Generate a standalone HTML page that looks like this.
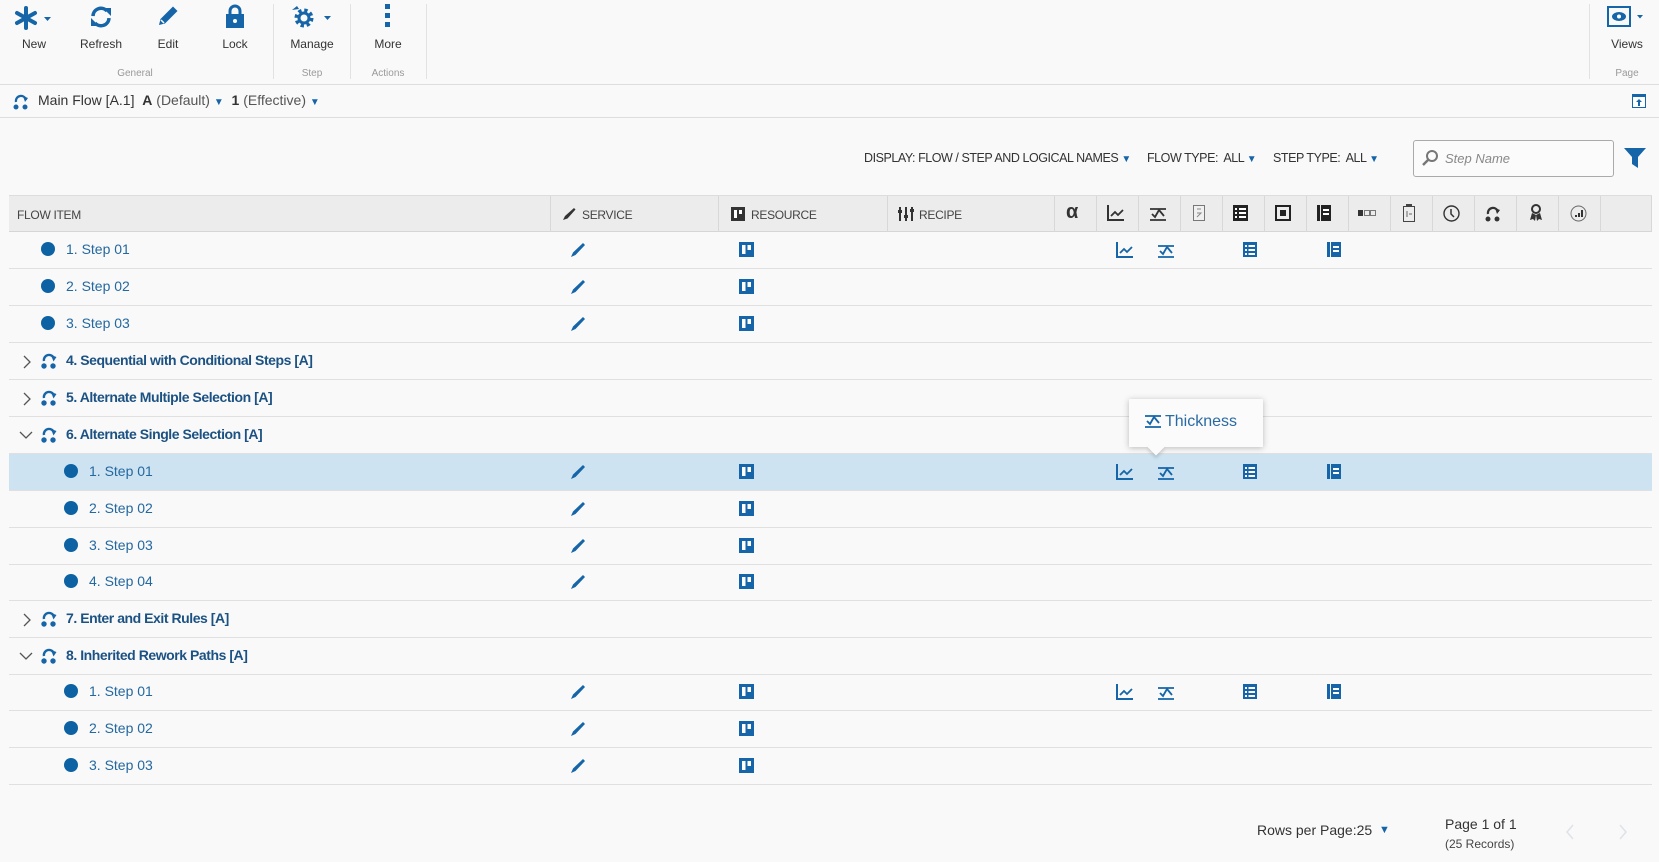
<!DOCTYPE html>
<html><head><meta charset="utf-8"><style>
*{box-sizing:border-box;margin:0;padding:0}
body{width:1659px;height:862px;background:#f9f9f9;font-family:"Liberation Sans",sans-serif;position:relative;overflow:hidden;color:#333}
.a{position:absolute}
.tb{font-size:12px;color:#333;text-align:center;width:70px}
.gl{font-size:10px;color:#999;text-align:center}
.sep{width:1px;background:#e2e2e2;top:4px;height:75px}
.hl{left:0;width:1659px;height:1px;background:#ddd}
.row{left:9px;width:1643px;height:37px;border-bottom:1px solid #e0e0e0}
.sel{background:#cde3f1}
.st{font-size:14px;color:#2468a0;top:9px}
.gr{font-size:14px;color:#1c5283;font-weight:bold;top:9px;letter-spacing:-.45px}
.dot{width:14px;height:14px;border-radius:50%;background:#0d62a3;top:10px}
.hd{font-size:12px;color:#444;top:12px;letter-spacing:-.3px}
.hc{top:0;height:36px;width:1px;background:#d8d8d8}
.fl{font-size:12.5px;color:#333;letter-spacing:-.45px;top:151px}
svg{position:absolute}
</style></head><body>
<svg class="a" style="left:14px;top:6px" width="42" height="24" viewBox="0 0 42 24"><g stroke="#1565a8" stroke-width="4" stroke-linecap="round"><line x1="12" y1="2" x2="12" y2="22"/><line x1="3" y1="7" x2="21" y2="17"/><line x1="3" y1="17" x2="21" y2="7"/></g><path d="M30 11h7l-3.5 4z" fill="#1565a8"/></svg>
<svg class="a" style="left:89px;top:5px" width="24" height="24" viewBox="0 0 24 24"><path d="M4 11a8 8 0 0 1 14-5" stroke="#1565a8" stroke-width="3.5" fill="none"/><path d="M20 13a8 8 0 0 1-14 5" stroke="#1565a8" stroke-width="3.5" fill="none"/><path d="M14 3h8v8z M10 21H2v-8z" fill="#1565a8"/></svg>
<svg class="a" style="left:156px;top:4px" width="24" height="24" viewBox="0 0 24 24"><path d="M3 21l1.5-6L17 2.5l4.5 4.5L9 19.5z" fill="#1565a8"/><path d="M5 16l3 3" stroke="#fff" stroke-width="1.5"/></svg>
<svg class="a" style="left:225px;top:4px" width="20" height="24" viewBox="0 0 20 24"><path d="M5 11V7a5 5 0 0 1 10 0v4" stroke="#1565a8" stroke-width="3" fill="none"/><rect x="1" y="10" width="18" height="14" fill="#1565a8"/><circle cx="10" cy="17" r="2" fill="#fff"/></svg>
<svg class="a" style="left:290px;top:4px" width="44" height="26" viewBox="0 0 44 26"><circle cx="14" cy="14" r="7" stroke="#1565a8" stroke-width="5" fill="none" stroke-dasharray="3 2.5"/><circle cx="14" cy="14" r="5" stroke="#1565a8" stroke-width="3" fill="none"/><path d="M2 6l5-4 2 3z" fill="#1565a8"/><path d="M34 12h7l-3.5 4z" fill="#1565a8"/></svg>
<svg class="a" style="left:385px;top:4px" width="6" height="24"><rect x="0" y="0" width="5" height="5" fill="#1565a8"/><rect x="0" y="9" width="5" height="5" fill="#1565a8"/><rect x="0" y="18" width="5" height="5" fill="#1565a8"/></svg>
<div class="a tb" style="left:-1px;top:37px">New</div>
<div class="a tb" style="left:66px;top:37px">Refresh</div>
<div class="a tb" style="left:133px;top:37px">Edit</div>
<div class="a tb" style="left:200px;top:37px">Lock</div>
<div class="a tb" style="left:277px;top:37px">Manage</div>
<div class="a tb" style="left:353px;top:37px">More</div>
<div class="a gl" style="left:100px;top:68px;width:70px">General</div>
<div class="a gl" style="left:277px;top:68px;width:70px">Step</div>
<div class="a gl" style="left:353px;top:68px;width:70px">Actions</div>
<div class="a sep" style="left:273px"></div><div class="a sep" style="left:350px"></div><div class="a sep" style="left:426px"></div><div class="a sep" style="left:1589px"></div>
<svg class="a" style="left:1607px;top:6px" width="44" height="22"><rect x="1" y="1" width="22" height="19" fill="none" stroke="#1565a8" stroke-width="2"/><ellipse cx="12" cy="10.5" rx="7" ry="4.5" fill="#1565a8"/><circle cx="12" cy="10.5" r="2" fill="#fff"/><path d="M30 9h6l-3 3.5z" fill="#1565a8"/></svg>
<div class="a tb" style="left:1592px;top:37px">Views</div>
<div class="a gl" style="left:1592px;top:68px;width:70px">Page</div>
<div class="a hl" style="top:84px"></div>
<svg class="a" style="left:13px;top:93px" width="17" height="17" viewBox="0 0 17 17"><path d="M3 9a5 5 0 0 1 10-2" stroke="#1565a8" stroke-width="2.2" fill="none"/><path d="M10 3l5 2-3 4z" fill="#1565a8"/><circle cx="3" cy="14" r="2.5" fill="#1565a8"/><circle cx="12" cy="14" r="2.5" fill="#1565a8"/></svg>
<div class="a" style="left:38px;top:92px;font-size:14px;color:#333">Main Flow [A.1] &nbsp;<b>A</b> <span style="color:#555">(Default)</span> <span style="color:#1565a8;font-size:10px">▼</span> &nbsp;<b>1</b> <span style="color:#555">(Effective)</span> <span style="color:#1565a8;font-size:10px">▼</span></div>
<svg class="a" style="left:1632px;top:94px" width="14" height="14"><rect x=".5" y=".5" width="13" height="13" fill="#fff" stroke="#1565a8"/><rect x="0" y="0" width="14" height="3" fill="#1565a8"/><path d="M7 5l-3 3h2v4h2V8h2z" fill="#1565a8"/></svg>
<div class="a hl" style="top:117px"></div>
<div class="a fl" style="left:864px">DISPLAY: FLOW / STEP AND LOGICAL NAMES <span style="color:#1565a8;font-size:10px">▼</span></div>
<div class="a fl" style="left:1147px">FLOW TYPE:&nbsp; ALL <span style="color:#1565a8;font-size:10px">▼</span></div>
<div class="a fl" style="left:1273px">STEP TYPE:&nbsp; ALL <span style="color:#1565a8;font-size:10px">▼</span></div>
<div class="a" style="left:1413px;top:140px;width:201px;height:37px;border:1px solid #aaa;border-radius:3px;background:#fbfbfb"></div>
<svg class="a" style="left:1421px;top:149px" width="18" height="18"><circle cx="11" cy="7" r="5" stroke="#777" stroke-width="2" fill="none"/><line x1="7" y1="11" x2="2" y2="16" stroke="#777" stroke-width="2.5"/></svg>
<div class="a" style="left:1445px;top:151px;font-size:13px;color:#888;font-style:italic">Step Name</div>
<svg class="a" style="left:1624px;top:148px" width="22" height="20"><path d="M0 0h22l-8 9v11l-6-4V9z" fill="#1565a8"/></svg>
<div class="a" style="left:9px;top:195px;width:1643px;height:37px;background:#ececec;border-top:1px solid #ddd;border-bottom:1px solid #d6d6d6">
<div class="a hd" style="left:8px">FLOW ITEM</div>
<div class="a hc" style="left:541px"></div><div class="a hc" style="left:709px"></div><div class="a hc" style="left:878px"></div>
<div class="a hc" style="left:1045px"></div><div class="a hc" style="left:1087px"></div><div class="a hc" style="left:1129px"></div><div class="a hc" style="left:1171px"></div><div class="a hc" style="left:1213px"></div><div class="a hc" style="left:1255px"></div><div class="a hc" style="left:1297px"></div><div class="a hc" style="left:1339px"></div><div class="a hc" style="left:1381px"></div><div class="a hc" style="left:1423px"></div><div class="a hc" style="left:1465px"></div><div class="a hc" style="left:1507px"></div><div class="a hc" style="left:1549px"></div><div class="a hc" style="left:1591px"></div><div class="a hc" style="left:1642px"></div>
<svg class="a" style="left:553px;top:11px" width="14" height="14"><path d="M1 13l2-4 9-8 1.5 1.5-8 9z" fill="#333"/></svg>
<div class="a hd" style="left:573px">SERVICE</div>
<svg class="a" style="left:722px;top:11px" width="14" height="14"><rect width="14" height="14" fill="#333"/><rect x="3" y="3" width="3" height="8" fill="#fff"/><rect x="8" y="3" width="3" height="4" fill="#fff"/></svg>
<div class="a hd" style="left:742px">RESOURCE</div>
<svg class="a" style="left:889px;top:11px" width="16" height="14"><g fill="#333"><rect x="1" width="2" height="14"/><rect x="7" width="2" height="14"/><rect x="13" width="2" height="14"/><rect x="0" y="3" width="4" height="3"/><rect x="6" y="8" width="4" height="3"/><rect x="12" y="2" width="4" height="3"/></g></svg>
<div class="a hd" style="left:910px">RECIPE</div>
<div class="a" style="left:1057px;top:5px;font-size:20px;font-weight:bold;color:#333">α</div>
<svg class="a" style="left:1098px;top:9px" width="18" height="16"><path d="M1 0v15h16" stroke="#333" stroke-width="2" fill="none"/><path d="M4 11l4-4 3 3 5-5" stroke="#333" stroke-width="1.8" fill="none"/></svg>
<svg class="a" style="left:1140px;top:9px" width="18" height="16"><path d="M1 15h16M1 4h16" stroke="#333" stroke-width="1.8"/><path d="M3 9l3 3 4-7 5 6" stroke="#333" stroke-width="1.8" fill="none"/></svg>
<svg class="a" style="left:1184px;top:9px" width="12" height="16"><rect x=".5" y=".5" width="11" height="15" fill="#f0f0f0" stroke="#777"/><path d="M4 4h4M4 8h4l-4 4" stroke="#888" fill="none"/></svg>
<svg class="a" style="left:1224px;top:9px" width="15" height="16"><rect width="15" height="16" fill="#222"/><g fill="#fff"><rect x="2" y="3" width="2" height="2"/><rect x="6" y="3" width="7" height="2"/><rect x="2" y="7" width="2" height="2"/><rect x="6" y="7" width="7" height="2"/><rect x="2" y="11" width="2" height="2"/><rect x="6" y="11" width="7" height="2"/></g></svg>
<svg class="a" style="left:1266px;top:9px" width="16" height="16"><rect x="1" y="1" width="14" height="14" fill="none" stroke="#222" stroke-width="2"/><rect x="5" y="5" width="6" height="6" fill="#222"/></svg>
<svg class="a" style="left:1308px;top:9px" width="14" height="16"><rect width="3" height="16" fill="#222"/><rect x="4" width="10" height="16" fill="#222"/><rect x="6" y="4" width="6" height="2" fill="#fff"/><rect x="6" y="8" width="6" height="2" fill="#fff"/></svg>
<svg class="a" style="left:1349px;top:14px" width="18" height="7"><rect x="0" y="0" width="5" height="6" fill="#333"/><rect x="6.5" y=".5" width="5" height="5" fill="none" stroke="#777"/><rect x="12.5" y=".5" width="5" height="5" fill="none" stroke="#777"/></svg>
<svg class="a" style="left:1394px;top:8px" width="12" height="18"><rect x=".5" y="2.5" width="11" height="15" fill="none" stroke="#444"/><rect x="3" y="0" width="6" height="3" fill="#444"/><path d="M4 7v6M6 10h3" stroke="#666"/></svg>
<svg class="a" style="left:1434px;top:9px" width="17" height="17"><circle cx="8.5" cy="8.5" r="7.5" fill="none" stroke="#333" stroke-width="1.4"/><path d="M8 4v5l3 3" stroke="#333" stroke-width="1.5" fill="none"/></svg>
<svg class="a" style="left:1476px;top:9px" width="17" height="17"><path d="M3 9a5 5 0 0 1 10-2" stroke="#333" stroke-width="2.2" fill="none"/><path d="M10 3l5 2-3 4z" fill="#333"/><circle cx="3" cy="14" r="2.5" fill="#333"/><circle cx="12" cy="14" r="2.5" fill="#333"/></svg>
<svg class="a" style="left:1520px;top:8px" width="14" height="18"><circle cx="7" cy="5" r="4" fill="none" stroke="#333" stroke-width="2"/><path d="M3 9l-2 7 3-1 2 2 1-6M11 9l2 7-3-1-2 2-1-6" fill="#333"/></svg>
<svg class="a" style="left:1561px;top:9px" width="17" height="17"><circle cx="8.5" cy="8.5" r="7.5" fill="none" stroke="#666"/><rect x="5" y="10" width="2" height="2" fill="#333"/><rect x="8" y="8" width="2" height="4" fill="#333"/><rect x="11" y="5" width="2" height="7" fill="#333"/></svg>
</div>
<svg width="0" height="0" style="position:absolute"><defs>
<g id="pen"><path d="M1 15l2-4.5L13 1l2 2-9.5 10z" fill="#1565a8"/></g>
<g id="res"><rect width="15" height="15" fill="#1565a8"/><rect x="3" y="3" width="3.5" height="9" fill="#fff"/><rect x="8.5" y="3" width="3.5" height="5" fill="#fff"/></g>
<g id="ch"><path d="M1 0v15h16" stroke="#1565a8" stroke-width="2" fill="none"/><path d="M4 11l4-4 3 3 5-5" stroke="#1565a8" stroke-width="1.8" fill="none"/></g>
<g id="th"><path d="M1 15h16M1 4h16" stroke="#1565a8" stroke-width="1.8"/><path d="M3 9l3 3 4-7 5 6" stroke="#1565a8" stroke-width="1.8" fill="none"/></g>
<g id="li"><rect width="14" height="15" fill="#1565a8"/><g fill="#fff"><rect x="2" y="3" width="2" height="2"/><rect x="5.5" y="3" width="6.5" height="2"/><rect x="2" y="7" width="2" height="2"/><rect x="5.5" y="7" width="6.5" height="2"/><rect x="2" y="11" width="2" height="2"/><rect x="5.5" y="11" width="6.5" height="2"/></g></g>
<g id="nb"><rect width="3" height="15" fill="#1565a8"/><rect x="4" width="10" height="15" fill="#1565a8"/><rect x="6" y="4" width="6" height="2" fill="#fff"/><rect x="6" y="8" width="6" height="2" fill="#fff"/></g>
<g id="gi"><path d="M3 9a5 5 0 0 1 10-2" stroke="#1565a8" stroke-width="2.4" fill="none"/><path d="M10 3l5.5 2-3 4.5z" fill="#1565a8"/><circle cx="3" cy="14" r="2.7" fill="#1565a8"/><circle cx="12" cy="14" r="2.7" fill="#1565a8"/></g>
</defs></svg>

<div class="a row" style="top:232px"><div class="a dot" style="left:32px"></div><div class="a st" style="left:57px">1. Step 01</div><svg class="a" style="left:561px;top:10px" width="16" height="16"><use href="#pen"/></svg><svg class="a" style="left:730px;top:10px" width="15" height="15"><use href="#res"/></svg><svg class="a" style="left:1107px;top:10px" width="18" height="16"><use href="#ch"/></svg><svg class="a" style="left:1148px;top:10px" width="18" height="16"><use href="#th"/></svg><svg class="a" style="left:1234px;top:10px" width="14" height="15"><use href="#li"/></svg><svg class="a" style="left:1318px;top:10px" width="14" height="15"><use href="#nb"/></svg></div>
<div class="a row" style="top:269px"><div class="a dot" style="left:32px"></div><div class="a st" style="left:57px">2. Step 02</div><svg class="a" style="left:561px;top:10px" width="16" height="16"><use href="#pen"/></svg><svg class="a" style="left:730px;top:10px" width="15" height="15"><use href="#res"/></svg></div>
<div class="a row" style="top:306px"><div class="a dot" style="left:32px"></div><div class="a st" style="left:57px">3. Step 03</div><svg class="a" style="left:561px;top:10px" width="16" height="16"><use href="#pen"/></svg><svg class="a" style="left:730px;top:10px" width="15" height="15"><use href="#res"/></svg></div>
<div class="a row" style="top:343px"><svg class="a" style="left:14px;top:12px" width="8" height="14"><path d="M1 1l6 6-6 6" stroke="#555" stroke-width="1.3" fill="none"/></svg><svg class="a" style="left:32px;top:9px" width="17" height="17"><use href="#gi"/></svg><div class="a gr" style="left:57px">4. Sequential with Conditional Steps [A]</div></div>
<div class="a row" style="top:380px"><svg class="a" style="left:14px;top:12px" width="8" height="14"><path d="M1 1l6 6-6 6" stroke="#555" stroke-width="1.3" fill="none"/></svg><svg class="a" style="left:32px;top:9px" width="17" height="17"><use href="#gi"/></svg><div class="a gr" style="left:57px">5. Alternate Multiple Selection [A]</div></div>
<div class="a row" style="top:417px"><svg class="a" style="left:10px;top:14px" width="14" height="8"><path d="M1 1l6 6 6-6" stroke="#555" stroke-width="1.3" fill="none"/></svg><svg class="a" style="left:32px;top:9px" width="17" height="17"><use href="#gi"/></svg><div class="a gr" style="left:57px">6. Alternate Single Selection [A]</div></div>
<div class="a row sel" style="top:454px"><div class="a dot" style="left:55px"></div><div class="a st" style="left:80px">1. Step 01</div><svg class="a" style="left:561px;top:10px" width="16" height="16"><use href="#pen"/></svg><svg class="a" style="left:730px;top:10px" width="15" height="15"><use href="#res"/></svg><svg class="a" style="left:1107px;top:10px" width="18" height="16"><use href="#ch"/></svg><svg class="a" style="left:1148px;top:10px" width="18" height="16"><use href="#th"/></svg><svg class="a" style="left:1234px;top:10px" width="14" height="15"><use href="#li"/></svg><svg class="a" style="left:1318px;top:10px" width="14" height="15"><use href="#nb"/></svg></div>
<div class="a row" style="top:491px"><div class="a dot" style="left:55px"></div><div class="a st" style="left:80px">2. Step 02</div><svg class="a" style="left:561px;top:10px" width="16" height="16"><use href="#pen"/></svg><svg class="a" style="left:730px;top:10px" width="15" height="15"><use href="#res"/></svg></div>
<div class="a row" style="top:528px"><div class="a dot" style="left:55px"></div><div class="a st" style="left:80px">3. Step 03</div><svg class="a" style="left:561px;top:10px" width="16" height="16"><use href="#pen"/></svg><svg class="a" style="left:730px;top:10px" width="15" height="15"><use href="#res"/></svg></div>
<div class="a row" style="top:564px"><div class="a dot" style="left:55px"></div><div class="a st" style="left:80px">4. Step 04</div><svg class="a" style="left:561px;top:10px" width="16" height="16"><use href="#pen"/></svg><svg class="a" style="left:730px;top:10px" width="15" height="15"><use href="#res"/></svg></div>
<div class="a row" style="top:601px"><svg class="a" style="left:14px;top:12px" width="8" height="14"><path d="M1 1l6 6-6 6" stroke="#555" stroke-width="1.3" fill="none"/></svg><svg class="a" style="left:32px;top:9px" width="17" height="17"><use href="#gi"/></svg><div class="a gr" style="left:57px">7. Enter and Exit Rules [A]</div></div>
<div class="a row" style="top:638px"><svg class="a" style="left:10px;top:14px" width="14" height="8"><path d="M1 1l6 6 6-6" stroke="#555" stroke-width="1.3" fill="none"/></svg><svg class="a" style="left:32px;top:9px" width="17" height="17"><use href="#gi"/></svg><div class="a gr" style="left:57px">8. Inherited Rework Paths [A]</div></div>
<div class="a row" style="top:674px"><div class="a dot" style="left:55px"></div><div class="a st" style="left:80px">1. Step 01</div><svg class="a" style="left:561px;top:10px" width="16" height="16"><use href="#pen"/></svg><svg class="a" style="left:730px;top:10px" width="15" height="15"><use href="#res"/></svg><svg class="a" style="left:1107px;top:10px" width="18" height="16"><use href="#ch"/></svg><svg class="a" style="left:1148px;top:10px" width="18" height="16"><use href="#th"/></svg><svg class="a" style="left:1234px;top:10px" width="14" height="15"><use href="#li"/></svg><svg class="a" style="left:1318px;top:10px" width="14" height="15"><use href="#nb"/></svg></div>
<div class="a row" style="top:711px"><div class="a dot" style="left:55px"></div><div class="a st" style="left:80px">2. Step 02</div><svg class="a" style="left:561px;top:10px" width="16" height="16"><use href="#pen"/></svg><svg class="a" style="left:730px;top:10px" width="15" height="15"><use href="#res"/></svg></div>
<div class="a row" style="top:748px"><div class="a dot" style="left:55px"></div><div class="a st" style="left:80px">3. Step 03</div><svg class="a" style="left:561px;top:10px" width="16" height="16"><use href="#pen"/></svg><svg class="a" style="left:730px;top:10px" width="15" height="15"><use href="#res"/></svg></div>
<div class="a" style="left:1129px;top:399px;width:134px;height:48px;background:#fbfbfb;box-shadow:0 1px 6px rgba(0,0,0,.25)"></div>
<div class="a" style="left:1150px;top:441px;width:12px;height:12px;background:#fbfbfb;transform:rotate(45deg);box-shadow:2px 2px 3px rgba(0,0,0,.15)"></div>
<div class="a" style="left:1129px;top:399px;width:134px;height:46px;background:#fbfbfb"></div>
<svg class="a" style="left:1144px;top:412px" width="18" height="16"><use href="#th"/></svg>
<div class="a" style="left:1165px;top:413px;font-size:16px;color:#2a6aa3">Thickness</div>
<div class="a" style="left:1257px;top:822px;font-size:14px;color:#333">Rows per Page:25</div>
<div class="a" style="left:1379px;top:824px;font-size:11px;color:#1565a8">▼</div>
<div class="a" style="left:1445px;top:816px;font-size:14px;color:#333">Page 1 of 1</div>
<div class="a" style="left:1445px;top:837px;font-size:12px;color:#444">(25 Records)</div>
<svg class="a" style="left:1565px;top:824px" width="10" height="16"><path d="M8 1L2 8l6 7" stroke="#dde3e8" stroke-width="1.5" fill="none"/></svg>
<svg class="a" style="left:1618px;top:824px" width="10" height="16"><path d="M2 1l6 7-6 7" stroke="#dde3e8" stroke-width="1.5" fill="none"/></svg>
</body></html>
